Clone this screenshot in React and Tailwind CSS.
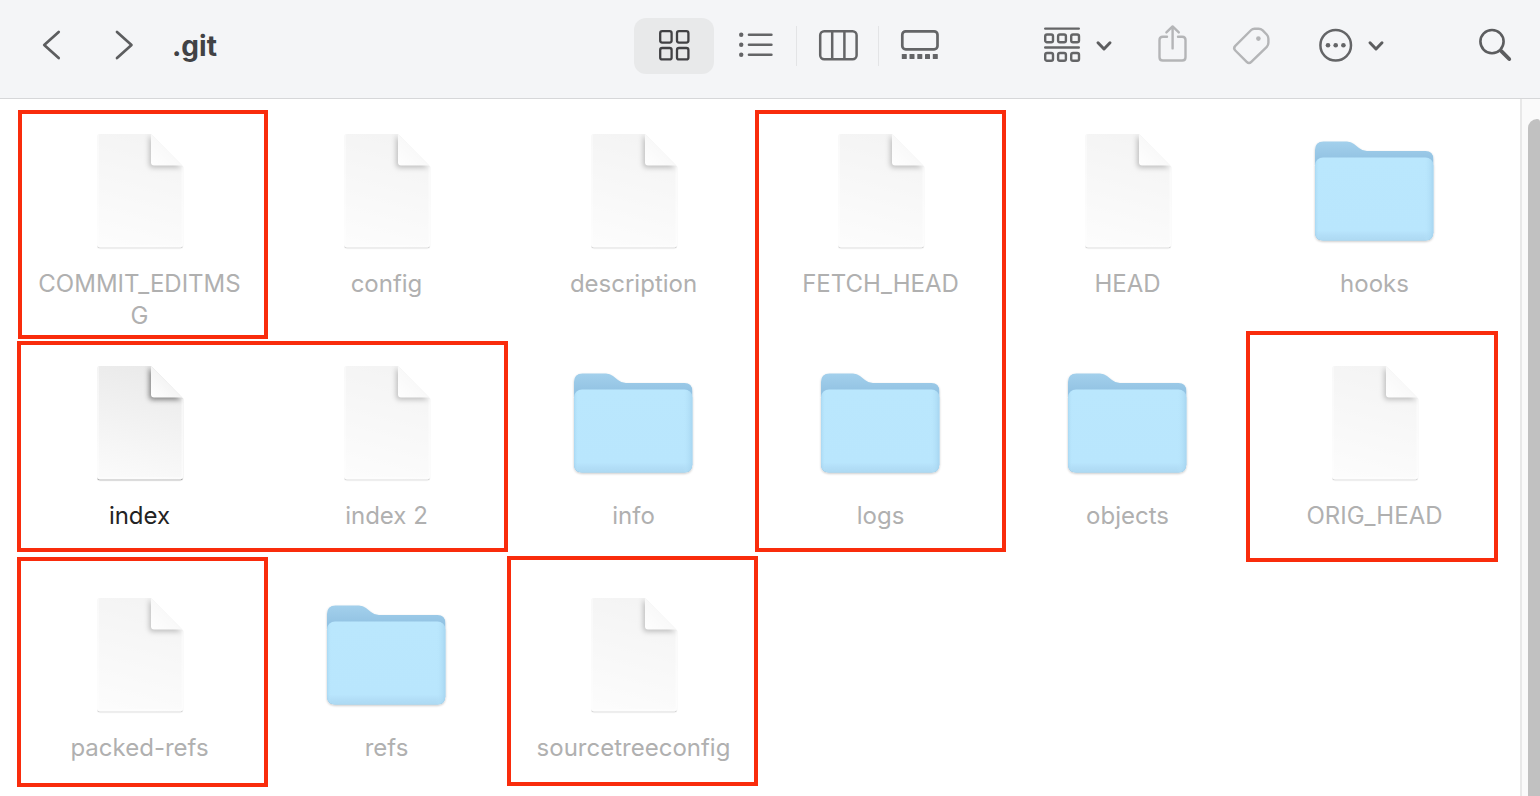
import { useId } from "react";

function BackIcon() {
  return (
    <svg viewBox="0 0 24 48" className="h-12 w-6" fill="none" stroke="#5c5d5f" strokeWidth="2.7" strokeLinecap="round" strokeLinejoin="round" aria-hidden="true">
      <path d="M18.7 9.9 4.2 22.9l14.5 13.2" />
    </svg>
  );
}

function ForwardIcon() {
  return (
    <svg viewBox="0 0 24 48" className="h-12 w-6" fill="none" stroke="#5c5d5f" strokeWidth="2.7" strokeLinecap="round" strokeLinejoin="round" aria-hidden="true">
      <path d="m5 9.9 14.5 13L5 36.1" />
    </svg>
  );
}

function ChevronDown() {
  return (
    <svg viewBox="0 0 24 48" className="h-12 w-6" fill="none" stroke="#5c5d5f" strokeWidth="3" strokeLinecap="round" strokeLinejoin="round" aria-hidden="true">
      <path d="m6 20.8 6 6.2 6-6.2" />
    </svg>
  );
}

function IconGrid() {
  return (
    <svg viewBox="0 0 48 48" className="size-12" fill="none" stroke="#414144" strokeWidth="2.3" aria-hidden="true">
      <rect x="10.2" y="9.2" width="11.4" height="11.4" rx="2" />
      <rect x="27" y="9.2" width="11.4" height="11.4" rx="2" />
      <rect x="10.2" y="26" width="11.4" height="11.4" rx="2" />
      <rect x="27" y="26" width="11.4" height="11.4" rx="2" />
    </svg>
  );
}

function IconList() {
  return (
    <svg viewBox="0 0 48 48" className="size-12" fill="none" stroke="#646567" strokeWidth="2.6" strokeLinecap="round" aria-hidden="true">
      {[12.8, 22.8, 32.8].map((y) => (
        <g key={y}>
          <circle cx="9.2" cy={y} r="2.2" fill="#646567" stroke="none" />
          <path d={`M17 ${y}h22.4`} />
        </g>
      ))}
    </svg>
  );
}

function IconColumns() {
  return (
    <svg viewBox="0 0 48 48" className="size-12" fill="none" stroke="#646567" strokeWidth="2.5" aria-hidden="true">
      <rect x="6.2" y="9.2" width="36.4" height="28" rx="4" />
      <path d="M18.2 9.2v28M30.4 9.2v28" />
    </svg>
  );
}

function IconGallery() {
  return (
    <svg viewBox="0 0 48 48" className="size-12" fill="none" stroke="#646567" strokeWidth="2.7" aria-hidden="true">
      <rect x="6.3" y="9.3" width="35.2" height="18" rx="3.4" />
      {[5.8, 13.5, 21.3, 29, 36.8].map((x) => (
        <rect key={x} x={x} y="32" width="5" height="5" rx="0.6" fill="#646567" stroke="none" />
      ))}
    </svg>
  );
}

function IconGroup() {
  return (
    <svg viewBox="0 0 48 48" className="size-12" fill="none" stroke="#646567" strokeWidth="2.4" strokeLinecap="round" aria-hidden="true">
      <path d="M5.2 6.6h33.6M5.2 25.5h33.6" />
      {[5.2, 18.1, 31.2].map((x) => (
        <g key={x}>
          <rect x={x} y="12.5" width="7.8" height="7.8" rx="1.8" />
          <rect x={x} y="31" width="7.8" height="7.8" rx="1.8" />
        </g>
      ))}
    </svg>
  );
}

function IconShare() {
  return (
    <svg viewBox="0 0 48 48" className="size-12" fill="none" stroke="#b4b5b7" strokeWidth="2.4" strokeLinecap="round" strokeLinejoin="round" aria-hidden="true">
      <path d="M19 14.7h-4.200q-3.300 0-3.300 3.300v17.200q0 3.300 3.300 3.300h19.400q3.300 0 3.300-3.300V18q0-3.300-3.300-3.300H30" />
      <path d="M24.600 26.400V4.800M18.400 10.400l6.200-6 6.200 6" />
    </svg>
  );
}

function IconTag() {
  return (
    <svg viewBox="0 0 48 48" className="size-12" fill="none" stroke="#b4b5b7" strokeWidth="2.4" strokeLinejoin="round" aria-hidden="true">
      <path d="M23.200 8 7.300 23.800Q5 26.200 7.300 28.500L18.700 39.900Q21 42.200 23.300 39.900L38.800 24.800Q40.400 23.200 40.400 20.800V16.800Q40.400 14.200 38.700 12.500L34.700 8.400Q32.900 6.700 30.500 6.700H26.500Q24.500 6.700 23.200 8Z" />
      <circle cx="30.400" cy="16.600" r="2.300" fill="#b4b5b7" stroke="none" />
    </svg>
  );
}

function IconMore() {
  return (
    <svg viewBox="0 0 48 48" className="size-12" fill="#646567" aria-hidden="true">
      <circle cx="23.700" cy="23.200" r="15.300" fill="none" stroke="#646567" strokeWidth="2.500" />
      <circle cx="16" cy="23.200" r="2.300" />
      <circle cx="23.700" cy="23.200" r="2.300" />
      <circle cx="31.400" cy="23.200" r="2.300" />
    </svg>
  );
}

function IconSearch() {
  return (
    <svg viewBox="0 0 48 48" className="size-12" fill="none" stroke="#5c5d5f" strokeLinecap="round" aria-hidden="true">
      <circle cx="20" cy="19.600" r="11.600" strokeWidth="2.600" />
      <path d="m29.600 29.300 7.600 7.700" strokeWidth="3.900" />
    </svg>
  );
}

function FolderArt() {
  const id = useId();
  return (
    <svg viewBox="0 0 127 128" className="h-32 w-[127px]" aria-hidden="true">
      <defs>
        <linearGradient id={`${id}b`} x1="0" y1="0" x2="0" y2="1">
          <stop offset="0" stopColor="#a3d0ec" />
          <stop offset="0.18" stopColor="#93c3e3" />
          <stop offset="1" stopColor="#93c3e3" />
        </linearGradient>
        <linearGradient id={`${id}s`} x1="0" y1="0" x2="1" y2="0">
          <stop offset="0" stopColor="#9fcfec" stopOpacity="0.6" />
          <stop offset="0.04" stopColor="#bae7fd" stopOpacity="0" />
          <stop offset="0.92" stopColor="#bae7fd" stopOpacity="0" />
          <stop offset="1" stopColor="#a3d2ee" stopOpacity="0.8" />
        </linearGradient>
        <linearGradient id={`${id}f`} x1="0" y1="0" x2="0" y2="1">
          <stop offset="0" stopColor="#bae7fd" />
          <stop offset="0.88" stopColor="#b9e6fd" />
          <stop offset="0.93" stopColor="#b3dff8" />
          <stop offset="1" stopColor="#add9f2" />
        </linearGradient>
        <filter id={`${id}d`} x="-10%" y="-10%" width="120%" height="125%">
          <feDropShadow dx="0" dy="1" stdDeviation="1" floodColor="#000" floodOpacity="0.22" />
        </filter>
      </defs>
      <g filter={`url(#${id}d)`}>
        <path d="M4 23Q4 14.500 12.500 14.500H36Q40 14.500 43 17L48 21Q51.500 24 56 24H114.500Q122.300 24 122.300 32V105.500Q122.300 113.500 114.300 113.500H12Q4 113.500 4 105.500Z" fill={`url(#${id}b)`} />
        <rect x="4" y="30.500" width="118.300" height="83" rx="8" fill={`url(#${id}f)`} />
        <rect x="4" y="30.500" width="118.300" height="83" rx="8" fill={`url(#${id}s)`} />
      </g>
    </svg>
  );
}

function FileArt({ active }) {
  const id = useId();
  return (
    <svg viewBox="0 0 127 128" className={active ? "h-32 w-[127px]" : "h-32 w-[127px] opacity-50"} aria-hidden="true">
      <defs>
        <linearGradient id={`${id}p`} x1="0.600" y1="0" x2="0.400" y2="1">
          <stop offset="0" stopColor="#eaeaea" />
          <stop offset="0.500" stopColor="#f2f2f2" />
          <stop offset="1" stopColor="#fafafa" />
        </linearGradient>
        <linearGradient id={`${id}c`} x1="0" y1="1" x2="0.550" y2="0.450">
          <stop offset="0" stopColor="#fff" />
          <stop offset="1" stopColor="#f3f3f3" />
        </linearGradient>
        <filter id={`${id}d`} x="-10%" y="-10%" width="120%" height="125%">
          <feDropShadow dx="0" dy="1.200" stdDeviation="0.700" floodColor="#000" floodOpacity="0.340" />
        </filter>
        <filter id={`${id}k`} x="-40%" y="-40%" width="180%" height="180%">
          <feGaussianBlur stdDeviation="2.600" />
        </filter>
        <clipPath id={`${id}m`}>
          <path d="M24 7H75L107.200 39.500V117.500Q107.200 120.300 104.200 120.300H24Q21 120.300 21 117.500V10Q21 7 24 7Z" />
        </clipPath>
      </defs>
      <path d="M24 7H75L107.200 39.500V117.500Q107.200 120.300 104.200 120.300H24Q21 120.300 21 117.500V10Q21 7 24 7Z" fill={`url(#${id}p)`} filter={`url(#${id}d)`} />
      <g clipPath={`url(#${id}m)`}>
        <path d="M22 8V116.500Q22 119 24.500 119H103.700Q106.200 119 106.200 116.500V40" fill="none" stroke="#fff" strokeOpacity="0.600" strokeWidth="1.500" />
        <path d="M73 8V37Q73 41 77 41H106Z" fill="#000" fillOpacity="0.440" filter={`url(#${id}k)`} />
        <path d="M75 7V35.500Q75 38.500 78 38.500H106.500Z" fill={`url(#${id}c)`} />
      </g>
    </svg>
  );
}

const markBase = "pointer-events-none absolute z-10 border-4 border-[#f92c0c] ";

const entries = [
  { name: "COMMIT_EDITMSG", mark: "-top-[17px] left-0.5 h-[229px] w-[calc(100%+3px)]" },
  { name: "config" },
  { name: "description" },
  { name: "FETCH_HEAD", mark: "-top-[17px] -left-0.5 h-[442px] w-[calc(100%+4px)]" },
  { name: "HEAD" },
  { name: "hooks", folder: true },
  { name: "index", active: true, mark: "-top-[18px] left-px h-[211px] w-[calc(200%-3px)]" },
  { name: "index 2" },
  { name: "info", folder: true },
  { name: "logs", folder: true },
  { name: "objects", folder: true },
  { name: "ORIG_HEAD", mark: "-top-7 -left-[5px] h-[231px] w-[calc(100%+5px)]" },
  { name: "packed-refs", mark: "-top-[34px] left-px h-[230px] w-[calc(100%+4px)]" },
  { name: "refs", folder: true },
  { name: "sourcetreeconfig", mark: "-top-[35px] -left-[3px] h-[230px] w-[calc(100%+4px)]" },
];

function Entry({ entry }) {
  return (
    <li className="relative flex justify-center">
      <button type="button" className="flex flex-col items-center gap-[13px]">
        {entry.folder ? <FolderArt /> : <FileArt active={entry.active} />}
        <span className={`min-h-16 w-[215px] text-center text-2xl leading-8 break-all ${entry.active ? "text-[#232323]" : "text-[#b0b0b0]"}`}>
          {entry.name}
        </span>
      </button>
      {entry.mark && <span className={markBase + entry.mark} />}
    </li>
  );
}

function ViewButton({ label, selected, children }) {
  return (
    <button
      type="button"
      aria-label={label}
      aria-pressed={!!selected}
      className={`flex h-14 w-20 items-center justify-center rounded-xl ${selected ? "bg-[#e8e9ea]" : ""}`}
    >
      {children}
    </button>
  );
}

function Divider({ hidden }) {
  return <span className={`h-10 w-0.5 border-l ${hidden ? "border-transparent" : "border-[#e3e4e6]"}`} />;
}

export default function App() {
  return (
    <div className="flex min-h-screen flex-col bg-white font-['Inter',sans-serif]">
      <header className="flex items-start border-b border-[#d6d7d9] bg-[#f4f5f7] pt-[18px] pr-5 pb-6 pl-10">
        <div className="flex h-14 grow items-center">
          <button type="button" aria-label="Back">
            <BackIcon />
          </button>
          <button type="button" aria-label="Forward" className="ml-12">
            <ForwardIcon />
          </button>
          <h1 className="ml-9 text-[28px] leading-14 font-bold text-[#414245]">.git</h1>
        </div>
        <div className="flex items-center" role="group" aria-label="View">
          <ViewButton label="Icons" selected>
            <IconGrid />
          </ViewButton>
          <Divider hidden />
          <ViewButton label="List">
            <IconList />
          </ViewButton>
          <Divider />
          <ViewButton label="Columns">
            <IconColumns />
          </ViewButton>
          <Divider />
          <ViewButton label="Gallery">
            <IconGallery />
          </ViewButton>
        </div>
        <div className="ml-20 flex h-14 items-center">
          <button type="button" aria-label="Group" className="flex items-center gap-1">
            <IconGroup />
            <ChevronDown />
          </button>
          <button type="button" aria-label="Share" className="ml-8">
            <IconShare />
          </button>
          <button type="button" aria-label="Edit tags" className="ml-8">
            <IconTag />
          </button>
          <button type="button" aria-label="More actions" className="ml-9 flex items-center gap-1">
            <IconMore />
            <ChevronDown />
          </button>
          <button type="button" aria-label="Search" className="ml-[84px]">
            <IconSearch />
          </button>
        </div>
      </header>
      <div className="flex grow">
        <main className="grow">
          <ul className="grid grid-cols-6 gap-y-[27px] pt-7 pr-[22px] pl-4">
            {entries.map((entry) => (
              <Entry key={entry.name} entry={entry} />
            ))}
          </ul>
        </main>
        <div className="flex w-5 flex-none flex-col border-l-2 border-[#e8e8e8] bg-[#fafafa] pt-5 pl-1.5">
          <div className="grow rounded-tl-xl rounded-tr-sm bg-[#c1c1c1]" />
        </div>
      </div>
    </div>
  );
}
